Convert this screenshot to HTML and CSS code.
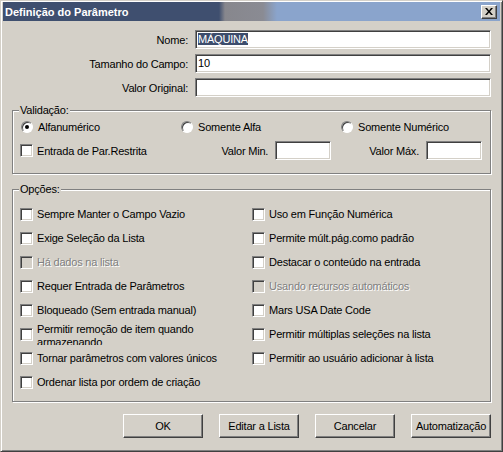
FILE: index.html
```html
<!DOCTYPE html>
<html lang="pt">
<head>
    <meta charset="UTF-8">
    <title>Definição do Parâmetro</title>
    <link rel="stylesheet" href="styles.css">
</head>
<body>
    <div class="window">
        <!-- barra de título -->
        <div class="titlebar">
            <span class="title">Definição do Parâmetro</span>
            <span class="close-btn">
                <svg width="8" height="7" viewBox="0 0 8 7"><path d="M0 0h2l2 2.4L6 0h2L5 3.5 8 7H6L4 4.6 2 7H0l3-3.5z" fill="#000"/></svg>
            </span>
        </div>

        <div class="content">
            <!-- campos principais -->
            <div class="fields">
                <label>Nome:</label>
                <div class="input"><span class="selected">MÁQUINA</span></div>
                <label>Tamanho do Campo:</label>
                <div class="input">10</div>
                <label>Valor Original:</label>
                <div class="input"></div>
            </div>

            <!-- validação -->
            <div class="group validation">
                <span class="group-title">Validação:</span>
                <div class="radio-row">
                    <label class="radio-item"><span class="radio checked"></span>Alfanumérico</label>
                    <label class="radio-item"><span class="radio"></span>Somente Alfa</label>
                    <label class="radio-item"><span class="radio"></span>Somente Numérico</label>
                </div>
                <div class="range-row">
                    <label class="check-item grow"><span class="checkbox"></span>Entrada de Par.Restrita</label>
                    <div class="range-field"><span>Valor Min.</span><div class="input small"></div></div>
                    <div class="range-field"><span>Valor Máx.</span><div class="input small"></div></div>
                </div>
            </div>

            <!-- opções -->
            <div class="group options">
                <span class="group-title">Opções:</span>
                <div class="options-grid">
                    <label class="check-item"><span class="checkbox"></span>Sempre Manter o Campo Vazio</label>
                    <label class="check-item"><span class="checkbox"></span>Exige Seleção da Lista</label>
                    <label class="check-item disabled"><span class="checkbox"></span>Há dados na lista</label>
                    <label class="check-item"><span class="checkbox"></span>Requer Entrada de Parâmetros</label>
                    <label class="check-item"><span class="checkbox"></span>Bloqueado (Sem entrada manual)</label>
                    <label class="check-item"><span class="checkbox"></span><span class="wrap-text">Permitir remoção de item quando armazenando</span></label>
                    <label class="check-item"><span class="checkbox"></span>Tornar parâmetros com valores únicos</label>
                    <label class="check-item"><span class="checkbox"></span>Ordenar lista por ordem de criação</label>

                    <label class="check-item"><span class="checkbox"></span>Uso em Função Numérica</label>
                    <label class="check-item"><span class="checkbox"></span>Permite múlt.pág.como padrão</label>
                    <label class="check-item"><span class="checkbox"></span>Destacar o conteúdo na entrada</label>
                    <label class="check-item disabled"><span class="checkbox"></span>Usando recursos automáticos</label>
                    <label class="check-item"><span class="checkbox"></span>Mars USA Date Code</label>
                    <label class="check-item"><span class="checkbox"></span>Permitir múltiplas seleções na lista</label>
                    <label class="check-item"><span class="checkbox"></span>Permitir ao usuário adicionar à lista</label>
                </div>
            </div>

            <!-- botões -->
            <div class="buttons">
                <button type="button">OK</button>
                <button type="button">Editar a Lista</button>
                <button type="button">Cancelar</button>
                <button type="button">Automatização</button>
            </div>
        </div>
    </div>
</body>
</html>
```

FILE: styles.css
```css
body {
    margin: 0;
    font-family: "Liberation Sans", Arial, sans-serif;
    font-size: 11px;
    letter-spacing: -0.2px;
    color: #000;
}
.window {
    width: 503px;
    height: 452px;
    box-sizing: border-box;
    background-color: #d4d0c8;
    border: 1px solid;
    border-color: #d4d0c8 #404040 #404040 #d4d0c8;
    box-shadow: inset 1px 1px 0 #fff, inset -1px -1px 0 #808080;
    padding: 1px 2px 2px 2px;
}

/* barra de título */
.titlebar {
    height: 19px;
    display: flex;
    align-items: center;
    justify-content: space-between;
    padding: 0 3px 0 2px;
    background: linear-gradient(90deg, #3f4f6f 0, #3f4f6f 216px, #87878d 222px, #8a8b93 260px, #8aa4cc 274px, #8aa4cc 100%);
}
.title {
    color: #fff;
    font-weight: bold;
    letter-spacing: 0;
}
.close-btn {
    width: 16px;
    height: 14px;
    box-sizing: border-box;
    display: flex;
    align-items: center;
    justify-content: center;
    background-color: #d4d0c8;
    border: 1px solid;
    border-color: #fff #404040 #404040 #fff;
    box-shadow: inset -1px -1px 0 #808080;
}

.content {
    padding: 0 9px;
}

/* campos */
.fields {
    display: grid;
    grid-template-columns: 176px 1fr;
    column-gap: 7px;
    row-gap: 5px;
    align-items: center;
    margin-top: 9px;
}
.fields label {
    text-align: right;
}
.input {
    height: 19px;
    box-sizing: border-box;
    background-color: #fff;
    border: 1px solid;
    border-color: #808080 #fff #fff #808080;
    box-shadow: inset 1px 1px 0 #404040, inset -1px -1px 0 #d4d0c8;
    padding: 0 2px;
    line-height: 17px;
    white-space: nowrap;
}
.input.small {
    width: 56px;
}
.selected {
    background-color: #3d4d6c;
    color: #fff;
}

/* grupos */
.group {
    position: relative;
    border: 1px solid #808080;
    box-shadow: inset 1px 1px 0 #fff, 1px 1px 0 #fff;
}
.group-title {
    position: absolute;
    top: -7px;
    left: 6px;
    padding: 0 1px;
    line-height: 13px;
    background-color: #d4d0c8;
}
.validation {
    margin-top: 13px;
    padding: 8px 8px 13px 7px;
}
.radio-row {
    display: grid;
    grid-template-columns: 160px 160px 1fr;
    height: 16px;
    align-items: center;
}
.radio-item {
    display: flex;
    align-items: center;
    gap: 5px;
    margin-left: 1px;
}
.radio {
    width: 12px;
    height: 12px;
    box-sizing: border-box;
    border-radius: 50%;
    background-color: #fff;
    border: 1px solid;
    border-color: #808080 #fff #fff #808080;
    box-shadow: inset 1px 1px 0 #404040;
    display: flex;
    align-items: center;
    justify-content: center;
}
.radio.checked::after {
    content: "";
    width: 4px;
    height: 4px;
    border-radius: 50%;
    background-color: #000;
}
.range-row {
    display: flex;
    align-items: center;
    margin-top: 6px;
}
.range-field {
    display: flex;
    align-items: center;
    gap: 7px;
    margin-left: 38px;
}

/* caixas de seleção */
.check-item {
    display: flex;
    align-items: center;
    gap: 4px;
}
.check-item.grow {
    flex: 1;
}
.checkbox {
    flex: none;
    width: 13px;
    height: 13px;
    box-sizing: border-box;
    background-color: #fff;
    border: 1px solid;
    border-color: #808080 #fff #fff #808080;
    box-shadow: inset 1px 1px 0 #404040, inset -1px -1px 0 #d4d0c8;
}
.check-item.disabled {
    color: #808080;
    text-shadow: 1px 1px 0 #fff;
}
.check-item.disabled .checkbox {
    background-color: #d4d0c8;
}
.wrap-text {
    width: 175px;
    height: 22px;
    line-height: 13px;
    overflow: hidden;
}

.options {
    margin-top: 15px;
    padding: 12px 0 7px 7px;
}
.options-grid {
    display: grid;
    grid-template-columns: 232px 1fr;
    grid-template-rows: repeat(8, 24px);
    grid-auto-flow: column;
    align-items: center;
}

/* botões */
.buttons {
    display: flex;
    justify-content: flex-end;
    gap: 16px;
    margin-top: 12px;
}
.buttons button {
    width: 80px;
    height: 24px;
    padding: 0;
    font-family: inherit;
    font-size: 11px;
    letter-spacing: -0.2px;
    color: #000;
    background-color: #d4d0c8;
    border: 1px solid;
    border-color: #fff #404040 #404040 #fff;
    box-shadow: inset -1px -1px 0 #808080;
    cursor: pointer;
}
```
